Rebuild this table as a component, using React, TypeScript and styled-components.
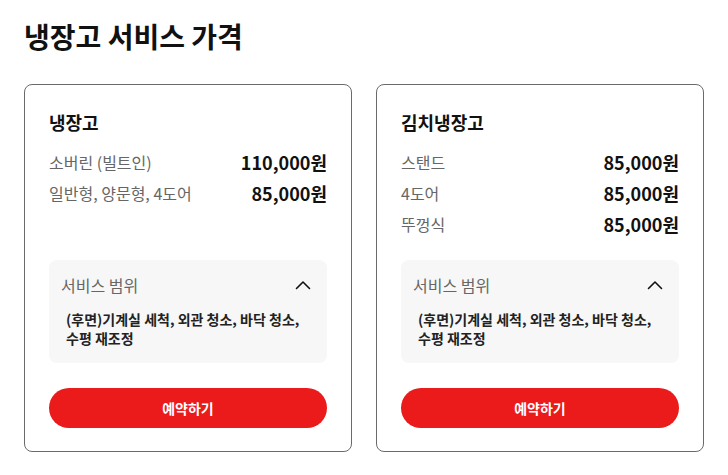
import React from "react";
import styled, { createGlobalStyle } from "styled-components";

const Global = createGlobalStyle`
  * { box-sizing: border-box; }
  html, body { margin: 0; padding: 0; background: #fff; }
  body {
    font-family: "Noto Sans CJK KR", "Noto Sans", sans-serif;
    color: #111;
  }
`;

const Page = styled.main`
  padding: 16px 24px 24px;
`;

const Title = styled.h1`
  margin: 0 0 28px;
  font-size: 28px;
  line-height: 40px;
  font-weight: 700;
  color: #111;
`;

const Grid = styled.div`
  display: grid;
  grid-template-columns: 1fr 1fr;
  gap: 24px;
`;

const Card = styled.section`
  display: flex;
  flex-direction: column;
  border: 1px solid #6b6b6b;
  border-radius: 8px;
  padding: 24px 24px 23px;
`;

const CardTitle = styled.h2`
  margin: 0 0 12px;
  font-size: 18px;
  line-height: 27px;
  font-weight: 700;
  color: #111;
`;

const Rows = styled.ul`
  list-style: none;
  margin: 0;
  padding: 0;
  display: flex;
  flex-direction: column;
  gap: 4px;
  flex: 1;
  min-height: 89px;
`;

const Row = styled.li`
  display: flex;
  justify-content: space-between;
  align-items: center;
  height: 27px;
`;

const Label = styled.span`
  font-size: 16px;
  color: #666;
`;

const Price = styled.span`
  font-size: 18px;
  font-weight: 700;
  color: #111;
`;

const Scope = styled.div`
  margin-top: 23px;
  background: #f7f7f7;
  border-radius: 8px;
  padding: 13px 12px 15px 12px;
`;

const ScopeHead = styled.div`
  display: flex;
  justify-content: space-between;
  align-items: center;
  height: 24px;
`;

const ScopeTitle = styled.span`
  font-size: 16px;
  color: #666;
`;

const ScopeText = styled.p`
  margin: 13px 0 0;
  padding-left: 5px;
  font-size: 14px;
  line-height: 19px;
  font-weight: 600;
  color: #222;
`;

const ReserveButton = styled.button`
  margin-top: 25px;
  height: 40px;
  width: 100%;
  border: none;
  border-radius: 20px;
  background: #ec1b1b;
  color: #fff;
  font-family: inherit;
  font-size: 14px;
  font-weight: 700;
  cursor: pointer;
`;

const Chevron = () => (
  <svg width="24" height="24" viewBox="0 0 24 24" fill="none" stroke="#111" strokeWidth="1.6" strokeLinecap="round" strokeLinejoin="round">
    <path d="M5.5 15.5 12 9l6.5 6.5" />
  </svg>
);

type Item = { label: string; price: string };

const cards: { title: string; items: Item[] }[] = [
  {
    title: "냉장고",
    items: [
      { label: "소버린 (빌트인)", price: "110,000원" },
      { label: "일반형, 양문형, 4도어", price: "85,000원" },
    ],
  },
  {
    title: "김치냉장고",
    items: [
      { label: "스탠드", price: "85,000원" },
      { label: "4도어", price: "85,000원" },
      { label: "뚜껑식", price: "85,000원" },
    ],
  },
];

export default function App() {
  return (
    <>
      <Global />
      <Page>
        <Title>냉장고 서비스 가격</Title>
        <Grid>
          {cards.map((c) => (
            <Card key={c.title}>
              <CardTitle>{c.title}</CardTitle>
              <Rows>
                {c.items.map((it) => (
                  <Row key={it.label}>
                    <Label>{it.label}</Label>
                    <Price>{it.price}</Price>
                  </Row>
                ))}
              </Rows>
              <Scope>
                <ScopeHead>
                  <ScopeTitle>서비스 범위</ScopeTitle>
                  <Chevron />
                </ScopeHead>
                <ScopeText>
                  (후면)기계실 세척, 외관 청소, 바닥 청소,
                  <br />
                  수평 재조정
                </ScopeText>
              </Scope>
              <ReserveButton>예약하기</ReserveButton>
            </Card>
          ))}
        </Grid>
      </Page>
    </>
  );
}
